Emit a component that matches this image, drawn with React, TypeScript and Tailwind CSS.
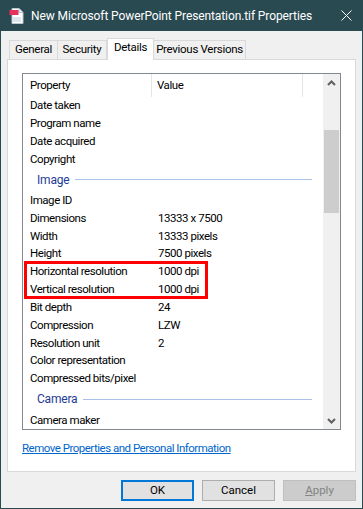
import React from 'react'

const uiFont = { fontFamily: 'Roboto, "Noto Sans", sans-serif' }

const Row = ({ name, value }: { name: string; value?: string }) => (
  <div className="flex h-[18px] items-center text-[11.5px] tracking-[-0.45px] text-black">
    <div className="w-[129px] pl-[7px] whitespace-nowrap">{name}</div>
    <div className="pl-[6px] whitespace-nowrap">{value}</div>
  </div>
)

const Group = ({ title, lineWidth }: { title: string; lineWidth: string }) => (
  <div className="flex h-[24px] items-center pl-[14px]">
    <span className="text-[12px] tracking-[-0.2px] text-[#1e3c96]">{title}</span>
    <div className={`ml-[6px] h-px bg-[#a9c0e8] ${lineWidth}`} />
  </div>
)

const TifIcon = () => (
  <svg width="16" height="16" viewBox="0 0 16 16">
    <path d="M3 0.5h7l4 4v11H3z" fill="#fff" stroke="#b8c4d0" />
    <path d="M10 0.5v4h4" fill="#e8eef4" stroke="#b8c4d0" />
    <rect x="0.5" y="2" width="9" height="5" fill="#e8315a" />
    <rect x="4" y="9" width="8" height="5" fill="#dde6ef" />
  </svg>
)

export default function App() {
  return (
    <div className="w-[363px] h-[509px] bg-[#2a4a52] flex flex-col px-px pb-px" style={uiFont}>
      {/* title bar */}
      <div className="h-[31px] flex items-center shrink-0">
        <div className="ml-[8px] mr-[6px] flex items-center">
          <TifIcon />
        </div>
        <span className="text-white text-[12px] tracking-[-0.1px] whitespace-nowrap">New Microsoft PowerPoint Presentation.tif Properties</span>
        <svg className="ml-auto mr-[10px]" width="11" height="11" viewBox="0 0 11 11">
          <path d="M0.5 0.5l10 10M10.5 0.5l-10 10" stroke="#fff" strokeWidth="1" />
        </svg>
      </div>

      <div className="flex-1 bg-[#f0f0f0] flex flex-col px-[6px]">
        {/* tabs */}
        <div className="flex items-end h-[28px] pt-[7px] pl-[2px] text-[11.5px] tracking-[-0.3px] text-black">
          <div className="w-[49px] h-[19px] flex items-center justify-center border border-b-0 border-[#d9d9d9] bg-[#f0f0f0]">General</div>
          <div className="w-[49px] h-[19px] flex items-center justify-center border border-b-0 border-l-0 border-[#d9d9d9] bg-[#f0f0f0]">Security</div>
          <div className="w-[47px] h-[22px] -mb-px pb-[3px] flex items-center justify-center border border-b-0 border-[#d9d9d9] bg-white relative z-10">Details</div>
          <div className="w-[92px] h-[19px] flex items-center justify-center border border-b-0 border-l-0 border-[#d9d9d9] bg-[#f0f0f0]">Previous Versions</div>
        </div>

        {/* panel */}
        <div className="h-[413px] bg-white border border-[#d9d9d9] pt-[13px] px-[14px] flex flex-col">
          <div className="h-[357px] border border-[#828790] flex overflow-hidden">
            <div className="flex-1 flex flex-col overflow-hidden">
              <div className="h-[23px] flex items-center shrink-0 text-[11.5px] tracking-[-0.45px] text-black">
                <div className="w-[129px] pl-[7px] h-full flex items-center border-r border-[#e5e5e5]">Property</div>
                <div className="w-[151px] pl-[5px] h-full flex items-center border-r border-[#e5e5e5]">Value</div>
              </div>
              <Row name="Date taken" />
              <Row name="Program name" />
              <Row name="Date acquired" />
              <Row name="Copyright" />
              <Group title="Image" lineWidth="w-[237px]" />
              <Row name="Image ID" />
              <Row name="Dimensions" value="13333 x 7500" />
              <Row name="Width" value="13333 pixels" />
              <Row name="Height" value="7500 pixels" />
              <div className="relative">
                <Row name="Horizontal resolution" value="1000 dpi" />
                <Row name="Vertical resolution" value="1000 dpi" />
                <div className="absolute left-px top-[-2px] w-[184px] h-[38px] border-[3px] border-[#ff0000]" />
              </div>
              <Row name="Bit depth" value="24" />
              <Row name="Compression" value="LZW" />
              <Row name="Resolution unit" value="2" />
              <Row name="Color representation" />
              <Row name="Compressed bits/pixel" />
              <Group title="Camera" lineWidth="w-[229px]" />
              <Row name="Camera maker" />
            </div>
            {/* scrollbar */}
            <div className="w-[17px] shrink-0 bg-[#f0f0f0] flex flex-col">
              <div className="h-[17px] flex items-center justify-center">
                <svg width="9" height="6" viewBox="0 0 9 6">
                  <path d="M1 5l3.5-3.5L8 5" stroke="#606060" strokeWidth="2" fill="none" />
                </svg>
              </div>
              <div className="h-[39px]" />
              <div className="h-[83px] mx-px bg-[#cdcdcd]" />
              <div className="flex-1" />
              <div className="h-[17px] flex items-center justify-center">
                <svg width="9" height="6" viewBox="0 0 9 6">
                  <path d="M1 1l3.5 3.5L8 1" stroke="#606060" strokeWidth="2" fill="none" />
                </svg>
              </div>
            </div>
          </div>
          <a href="#" className="mt-[10px] text-[11.5px] tracking-[-0.5px] text-[#0066cc] underline leading-[16px] self-start whitespace-nowrap">
            Remove Properties and Personal Information
          </a>
        </div>

        {/* buttons */}
        <div className="flex justify-end gap-[8px] pt-[8px] text-[11.5px]">
          <button className="w-[73px] h-[21px] bg-[#e1e1e1] border-2 border-[#0078d7] text-black">OK</button>
          <button className="w-[73px] h-[21px] bg-[#e1e1e1] border border-[#adadad] text-black">Cancel</button>
          <button className="w-[73px] h-[21px] bg-[#cccccc] border border-[#bfbfbf] text-[#838383]">
            <span className="underline">A</span>pply
          </button>
        </div>
      </div>
    </div>
  )
}
